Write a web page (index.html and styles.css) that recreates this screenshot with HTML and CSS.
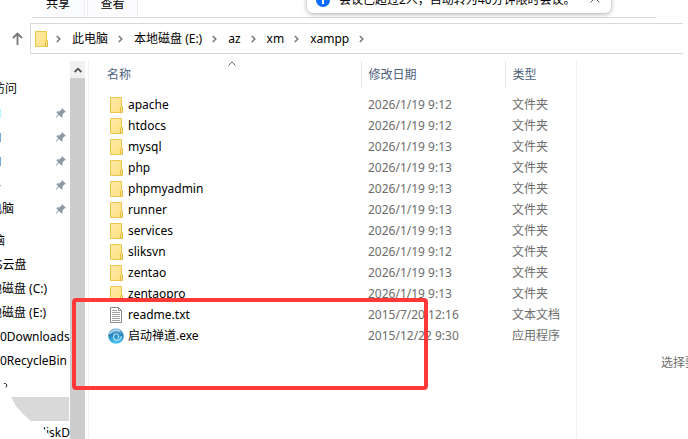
FILE: index.html
```html
<!DOCTYPE html>
<html lang="zh-CN">

<head>
    <meta charset="UTF-8">
    <meta name="viewport" content="width=device-width, initial-scale=1.0">
    <title>xampp</title>
    <link rel="stylesheet" href="styles.css">
</head>

<body>

    <!-- shared icons -->
    <svg class="defs" width="0" height="0">
        <linearGradient id="paper" x1="0" y1="0" x2="1" y2="1">
            <stop offset="0" stop-color="#ffe9a6" />
            <stop offset="1" stop-color="#ffe082" />
        </linearGradient>
        <symbol id="folder" viewBox="0 0 16 16">
            <path d="M2.500.5h11v15h-11z" fill="url(#paper)" stroke="#e9c64d" />
            <path d="M12.500 15.500V10.500l1-1h1v6z" fill="#ffe594" stroke="#e3bb3d" />
        </symbol>
        <symbol id="pin" viewBox="0 0 12 12">
            <path d="M7 1l4 4-1.300.3-2 2-.2 2.500-1 .7L4 8 .8 11.200.7 10.500 3.300 7.300 1.200 5.200l.8-.8 2.700-.1 2-2z" fill="#8d99a3" />
        </symbol>
        <symbol id="arrow" viewBox="0 0 5 8">
            <path d="M.8 1l3 3-3 3" fill="none" stroke="#767676" stroke-width="1.500" />
        </symbol>
    </svg>

    <div class="ribbon">
        <button class="tab">共享</button>
        <button class="tab">查看</button>
    </div>

    <div class="toast">
        <svg width="14" height="14" viewBox="0 0 14 14">
            <circle cx="7" cy="7" r="7" fill="#0b6cff" />
            <path d="M7 3v1.500M7 6v5" stroke="#fff" stroke-width="2" />
        </svg>
        <span>会议已超过2人，自动转为40分钟限时会议。</span>
        <button class="toast-close" aria-label="收起">
            <svg width="10" height="6" viewBox="0 0 10 6"><path d="M.5 5.500L5 1l4.500 4.500" fill="none" stroke="#555b66" /></svg>
        </button>
    </div>

    <div class="nav">
        <button class="up" aria-label="上移">
            <svg width="11" height="13" viewBox="0 0 11 13"><path d="M5.500 13V1.500M1 6l4.500-4.500L10 6" fill="none" stroke="#777" stroke-width="1.800" /></svg>
        </button>
        <div class="address">
            <svg class="icon"><use href="#folder" /></svg>
            <svg class="arrow"><use href="#arrow" /></svg>
            <a href="#">此电脑</a>
            <svg class="arrow"><use href="#arrow" /></svg>
            <a href="#">本地磁盘 (E:)</a>
            <svg class="arrow"><use href="#arrow" /></svg>
            <a href="#">az</a>
            <svg class="arrow"><use href="#arrow" /></svg>
            <a href="#">xm</a>
            <svg class="arrow"><use href="#arrow" /></svg>
            <a href="#">xampp</a>
            <svg class="arrow"><use href="#arrow" /></svg>
        </div>
    </div>

    <div class="main">
        <div class="sidebar">
            <div class="item root">访问</div>
            <div class="item"><i class="bit cyan"></i><svg class="pin"><use href="#pin" /></svg></div>
            <div class="item"><i class="bit"></i><svg class="pin"><use href="#pin" /></svg></div>
            <div class="item"><i class="bit"></i><svg class="pin"><use href="#pin" /></svg></div>
            <div class="item"><i class="bit dot"></i><svg class="pin"><use href="#pin" /></svg></div>
            <div class="item child">电脑<svg class="pin"><use href="#pin" /></svg></div>
            <div class="item root group">脑</div>
            <div class="item drive">S云盘</div>
            <div class="item child">地磁盘 (C:)</div>
            <div class="item child">地磁盘 (E:)</div>
            <div class="item">0Downloads</div>
            <div class="item">0RecycleBin</div>
            <div class="item">
                <svg class="scrap" width="4" height="5" viewBox="0 0 4 5"><path d="M0 .5h1.500L3 2 2 4.500" fill="none" stroke="#222" /></svg>
            </div>
            <div class="item selected"></div>
            <div class="item last">diskD</div>
        </div>

        <div class="scrollbar">
            <button class="scroll-up" aria-label="向上滚动">
                <svg width="8" height="6" viewBox="0 0 8 6"><path d="M.7 5L4 1.700 7.300 5" fill="none" stroke="#505050" stroke-width="1.800" /></svg>
            </button>
        </div>

        <div class="files">
            <svg class="sort" width="8" height="5" viewBox="0 0 8 5"><path d="M.5 4.500L4 1l3.500 3.500" fill="none" stroke="#666" /></svg>
            <table>
                <colgroup>
                    <col class="col-name">
                    <col class="col-date">
                    <col>
                </colgroup>
                <thead>
                    <tr><th>名称</th><th>修改日期</th><th>类型</th></tr>
                </thead>
                <tbody>
                    <tr><td><svg class="icon"><use href="#folder" /></svg>apache</td><td>2026/1/19 9:12</td><td>文件夹</td></tr>
                    <tr><td><svg class="icon"><use href="#folder" /></svg>htdocs</td><td>2026/1/19 9:12</td><td>文件夹</td></tr>
                    <tr><td><svg class="icon"><use href="#folder" /></svg>mysql</td><td>2026/1/19 9:13</td><td>文件夹</td></tr>
                    <tr><td><svg class="icon"><use href="#folder" /></svg>php</td><td>2026/1/19 9:13</td><td>文件夹</td></tr>
                    <tr><td><svg class="icon"><use href="#folder" /></svg>phpmyadmin</td><td>2026/1/19 9:13</td><td>文件夹</td></tr>
                    <tr><td><svg class="icon"><use href="#folder" /></svg>runner</td><td>2026/1/19 9:13</td><td>文件夹</td></tr>
                    <tr><td><svg class="icon"><use href="#folder" /></svg>services</td><td>2026/1/19 9:13</td><td>文件夹</td></tr>
                    <tr><td><svg class="icon"><use href="#folder" /></svg>sliksvn</td><td>2026/1/19 9:12</td><td>文件夹</td></tr>
                    <tr><td><svg class="icon"><use href="#folder" /></svg>zentao</td><td>2026/1/19 9:13</td><td>文件夹</td></tr>
                    <tr><td><svg class="icon"><use href="#folder" /></svg>zentaopro</td><td>2026/1/19 9:13</td><td>文件夹</td></tr>
                    <tr>
                        <td>
                            <svg class="icon" viewBox="0 0 16 16">
                                <path d="M2.500.5h8l3 3v12h-11z" fill="#fff" stroke="#8c8c8c" />
                                <path d="M10.500.5v3h3" fill="none" stroke="#8c8c8c" />
                                <path d="M4 3.500h5M4 5.500h8M4 7.500h8M4 9.500h8M4 11.500h8M4 13.500h8" stroke="#a0a0a0" />
                            </svg>readme.txt
                        </td>
                        <td>2015/7/20 12:16</td><td>文本文档</td>
                    </tr>
                    <tr>
                        <td>
                            <svg class="icon" viewBox="0 0 16 16">
                                <defs>
                                    <linearGradient id="ball" x1="0" y1="0" x2="0" y2="1">
                                        <stop offset="0" stop-color="#8fc4e2" />
                                        <stop offset=".45" stop-color="#2482be" />
                                        <stop offset="1" stop-color="#4fcaf0" />
                                    </linearGradient>
                                </defs>
                                <circle cx="8" cy="8" r="7.800" fill="url(#ball)" />
                                <path d="M1.500 6C4 2 9 1.500 12 3.500" fill="none" stroke="#a9d5ec" stroke-width="1.500" />
                                <path d="M13.500 8c-.5 4-5 5.500-7 3.500S5.500 6 8.300 6s3.200 3.500 1 3.700" fill="none" stroke="#b4e4f6" stroke-width="1.200" />
                            </svg>启动禅道.exe
                        </td>
                        <td>2015/12/22 9:30</td><td>应用程序</td>
                    </tr>
                </tbody>
            </table>
        </div>

        <div class="preview">选择要</div>

        <div class="mark"></div>
    </div>

</body>

</html>
```
FILE: styles.css
```css
* {
    box-sizing: border-box;
}
body {
    margin: 0;
    height: 100vh;
    overflow: hidden;
    display: flex;
    flex-direction: column;
    background: #fff;
    color: #000;
    font: 12px/20px "Noto Sans", "Noto Sans CJK SC", sans-serif;
}
button {
    border: 0;
    padding: 0;
    background: none;
    font: inherit;
    color: inherit;
}
a {
    color: inherit;
    text-decoration: none;
}
svg {
    display: block;
    flex: none;
}
.defs {
    position: absolute;
}
.icon {
    width: 16px;
    height: 16px;
}

/* ribbon */
.ribbon {
    flex: none;
    display: flex;
    gap: 2px;
    height: 18px;
    margin: 0 32px;
    border-bottom: 1px solid #dadbdc;
}
.tab {
    width: 51px;
    height: 17px;
    line-height: 8px;
    padding-bottom: 10px;
    border-right: 1px solid #e8e9ec;
    background: #fcfcfe;
}
.tab:first-child {
    width: 53px;
    background: linear-gradient(150deg, #fff 40%, #fafbfe 60%);
}
.tab + .tab {
    border-left: 1px solid #e8e9ec;
}
.toast {
    position: absolute;
    top: -14px;
    left: 307px;
    display: flex;
    align-items: center;
    gap: 9px;
    height: 27px;
    padding: 0 11px 0 9px;
    border-radius: 6px;
    background: #fff;
    box-shadow: 0 1px 5px rgba(0, 0, 0, 0.35);
    white-space: nowrap;
}
.toast-close {
    margin-left: 5px;
}

/* address bar */
.nav {
    flex: none;
    display: flex;
    margin-top: 5px;
}
.up {
    width: 30px;
    padding-left: 12px;
}
.address {
    flex: 1;
    display: flex;
    align-items: center;
    height: 31px;
    margin-right: 5px;
    padding-left: 2px;
    border: 1px solid #d9d9d9;
    border-right: 0;
}
.arrow {
    width: 5px;
    height: 8px;
    margin: 0 11px 0 10px;
}
.address .icon + .arrow {
    margin-left: 7px;
}

/* panes */
.main {
    flex: 1;
    display: flex;
    position: relative;
    min-height: 0;
    margin-top: 7px;
}
.sidebar {
    width: 70px;
    padding-top: 16px;
    overflow: hidden;
}
.item {
    display: flex;
    align-items: center;
    height: 24px;
    white-space: nowrap;
}
.root {
    margin-left: -7px;
}
.child {
    margin-left: -10px;
}
.drive {
    margin-left: -4px;
}
.group {
    margin-top: 8px;
}
.pin {
    width: 12px;
    height: 12px;
    margin: 0 3px 0 auto;
}
.bit {
    width: 1px;
    height: 9px;
    background: #79a9dc;
}
.cyan {
    background: #b9f6ff;
}
.dot {
    height: 1px;
}
.scrap {
    margin-left: 4px;
}
.selected {
    margin: 0 1px 0 11px;
    background: #d9d9d9;
    clip-path: polygon(0 0, 100% 0, 100% 100%, 20px 100%, 12px 17px, 5px 9px);
}
.last {
    justify-content: flex-end;
    clip-path: polygon(40px 0, 100% 0, 100% 100%, 58px 100%, 44px 8px);
}
.scrollbar {
    width: 15px;
    background: #cdcdcd;
}
.scroll-up {
    display: flex;
    align-items: center;
    justify-content: center;
    width: 15px;
    height: 17px;
    background: #f0f0f0;
}
.files {
    position: relative;
    width: 489px;
    margin-left: 3px;
    border: 1px solid #f0f0f0;
    border-width: 0 1px;
}
.sort {
    position: absolute;
    top: 0;
    left: 139px;
}
table {
    width: 100%;
    table-layout: fixed;
    border-collapse: collapse;
}
.col-name {
    width: 272px;
}
.col-date {
    width: 144px;
}
th {
    height: 27px;
    padding: 0 7px;
    border-right: 1px solid #e5e5e5;
    color: #4c607a;
    font-weight: normal;
    text-align: left;
}
th:first-child {
    padding-left: 18px;
}
th:last-child {
    border-right: 0;
}
tbody::before {
    content: "";
    display: block;
    height: 6px;
}
td {
    height: 21px;
    padding: 0 7px;
    color: #6d6d6d;
    white-space: nowrap;
}
td:first-child {
    padding-left: 19px;
    color: #000;
}
td .icon {
    float: left;
    margin: 2px 4px 0 0;
}
.preview {
    flex: 1;
    padding: 292px 0 0 84px;
    overflow: hidden;
    white-space: nowrap;
    color: #6d6d6d;
}

/* highlighted files */
.mark {
    position: absolute;
    top: 237px;
    left: 72px;
    width: 356px;
    height: 92px;
    border: 4px solid #ff3838;
    border-radius: 4px;
}
```
